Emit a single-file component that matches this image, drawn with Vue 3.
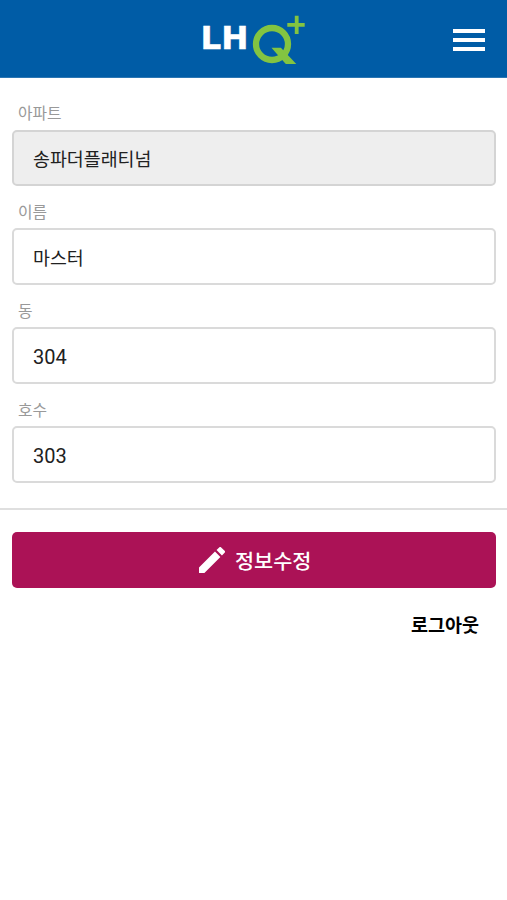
<script setup>
import { ref } from 'vue'

const fields = ref([
  { id: 'apartment', label: '아파트', value: '송파더플래티넘', readonly: true },
  { id: 'name', label: '이름', value: '마스터', readonly: false },
  { id: 'building', label: '동', value: '304', readonly: false, numeric: true },
  { id: 'unit', label: '호수', value: '303', readonly: false, numeric: true },
])
</script>

<template>
  <div class="page">
    <header class="header">
      <span></span>
      <svg class="logo" viewBox="0 0 104 54" role="img" aria-label="LH Q+">
        <text class="logo-text" x="-1.5" y="37.2">LH</text>
        <circle class="ring" cx="70" cy="32" r="16" />
        <path class="green" d="M69.5 35.7h9.4L94.3 52H83.8L78 45.6z" />
        <path class="green" d="M92.8 3.7h3.8V11h6.1v3.7h-6.1V22h-3.8v-7.3h-7.5V11h7.5z" />
      </svg>
      <button class="menu" type="button" aria-label="메뉴">
        <i></i><i></i><i></i>
      </button>
    </header>

    <main>
      <form class="form" @submit.prevent>
        <div v-for="field in fields" :key="field.id" class="field">
          <label :for="field.id">{{ field.label }}</label>
          <input
            :id="field.id"
            v-model="field.value"
            :class="{ numeric: field.numeric }"
            type="text"
            :readonly="field.readonly"
          />
        </div>
      </form>
      <section class="actions">
        <button class="edit" type="button">
          <svg class="pencil" viewBox="3 3 18 18" aria-hidden="true">
            <path d="M3 17.25V21h3.75L17.81 9.94l-3.75-3.75L3 17.25zM20.71 7.04a1 1 0 0 0 0-1.41l-2.34-2.34a1 1 0 0 0-1.41 0l-1.83 1.83 3.75 3.75z" />
          </svg>
          <span>정보수정</span>
        </button>
        <button class="logout" type="button">로그아웃</button>
      </section>
    </main>
  </div>
</template>

<style>
body {
  background: #fff;
}
</style>

<style scoped>
.page {
  min-height: 900px;
  font-family: Roboto, "Noto Sans CJK KR", sans-serif;
  color: #212121;
}

button {
  border: 0;
  padding: 0;
  background: none;
  font-family: inherit;
}

.header {
  box-sizing: border-box;
  height: 78px;
  padding: 0 22px;
  display: grid;
  grid-template-columns: 1fr 104px 1fr;
  align-items: center;
  background: #005ca6;
  border-bottom: 1px solid #2c76b3;
}

.logo {
  width: 104px;
  height: 54px;
  display: block;
  overflow: visible;
}

.logo-text {
  font: bold 32.5px "DejaVu Sans", sans-serif;
  fill: #fff;
  stroke: #fff;
  stroke-width: 0.4;
}

.ring {
  fill: none;
  stroke: #83c441;
  stroke-width: 6.3;
}

.green {
  fill: #83c441;
}

.menu {
  justify-self: end;
  width: 32px;
  display: grid;
  gap: 5px;
  padding-top: 3px;
}

.menu i {
  height: 4px;
  background: #fff;
}

.form {
  padding: 22px 11.5px 25px 12px;
  border-bottom: 2px solid #dfdfdf;
}

.field {
  height: 98.9px;
}

.field:last-child {
  height: 86px;
}

label {
  display: block;
  height: 29.5px;
  padding-left: 6px;
  font-size: 15.8px;
  line-height: 28px;
  color: #999;
}

input {
  box-sizing: border-box;
  display: block;
  width: 100%;
  height: 56.5px;
  padding: 0 19px;
  border: 2px solid #dadada;
  border-radius: 5px;
  background: #fff;
  color: #212121;
  font-family: inherit;
  font-size: 18.4px;
  outline: none;
}

input.numeric {
  padding-top: 3px;
  font-size: 20px;
}

input[readonly] {
  background: #eee;
  border-color: #d4d4d4;
}

.actions {
  padding: 22px 11.5px 0 12px;
  display: flex;
  flex-direction: column;
}

.edit {
  height: 56px;
  border-radius: 5px;
  background: #ab1256;
  color: #fff;
  display: flex;
  align-items: center;
  justify-content: center;
  gap: 10px;
  padding-left: 3px;
  font-size: 20.8px;
  font-weight: 500;
}

.pencil {
  width: 26px;
  height: 26px;
  fill: #fff;
}

.logout {
  align-self: flex-end;
  margin: 24px 16.5px 0 0;
  color: #000;
  font-size: 18.5px;
  font-weight: 700;
  line-height: 28px;
}
</style>
